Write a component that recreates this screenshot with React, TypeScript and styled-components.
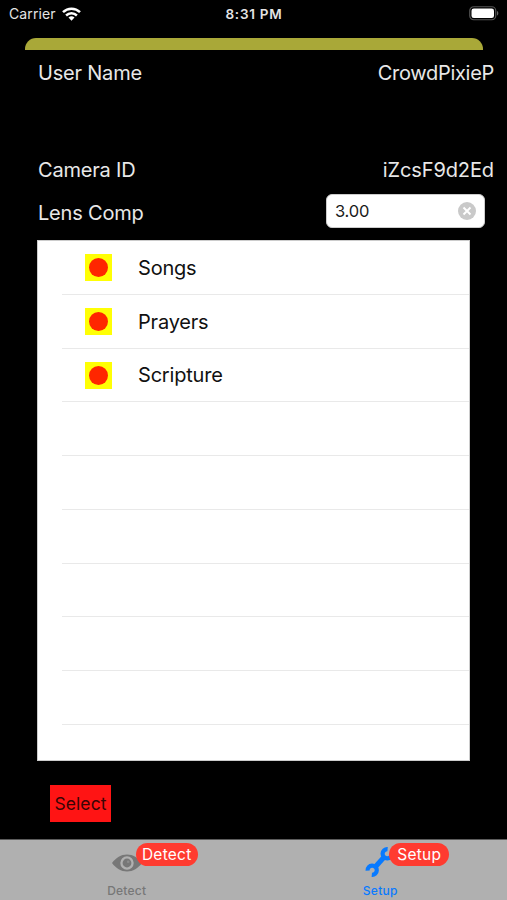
import React, { useState } from "react";
import styled, { createGlobalStyle } from "styled-components";

const GlobalStyle = createGlobalStyle`
  * {
    box-sizing: border-box;
  }

  body {
    margin: 0;
    background: #000;
    font-family: Inter, "Liberation Sans", sans-serif;
  }
`;

const Screen = styled.div`
  display: flex;
  flex-direction: column;
  width: 507px;
  height: 900px;
  overflow: hidden;
  background: #000;
`;

const StatusBar = styled.header`
  display: grid;
  grid-template-columns: 1fr auto 1fr;
  align-items: center;
  height: 28px;
  padding: 0 8px 1px 9px;
  color: #e4e4e4;
  font-size: 14px;
`;

const Carrier = styled.div`
  display: flex;
  align-items: center;
  gap: 6px;
  letter-spacing: 0.1px;
`;

const Clock = styled.div`
  font-weight: 600;
  font-size: 13.5px;
  letter-spacing: 0.75px;
`;

const BatteryIcon = styled.svg`
  justify-self: end;
`;

const Banner = styled.div`
  flex: none;
  height: 12px;
  margin: 10px 24px 0 25px;
  border-radius: 11px 11px 0 0;
  background: #a9a838;
`;

const Settings = styled.section`
  display: flex;
  flex-direction: column;
  height: 190px;
  padding-left: 38px;
`;

const Field = styled.div<{ $height: number; $right?: number }>`
  display: flex;
  flex: none;
  align-items: center;
  justify-content: space-between;
  height: ${(p) => p.$height}px;
  padding-right: ${(p) => p.$right ?? 13}px;
  color: #e8e8e8;
  font-size: 20px;
`;

const Text = styled.span<{ $spacing?: number }>`
  letter-spacing: ${(p) => p.$spacing ?? -0.2}px;
  white-space: nowrap;
`;

const Gap = styled.div`
  flex: none;
  height: 52px;
`;

const InputBox = styled.div`
  display: flex;
  align-items: center;
  width: 159px;
  height: 34px;
  margin-top: -4px;
  padding: 0 8px;
  border: 1px solid #ccc;
  border-radius: 6px;
  background: #fff;
`;

const Input = styled.input`
  flex: 1;
  min-width: 0;
  padding: 0;
  border: none;
  outline: none;
  background: transparent;
  color: #1a1a1a;
  font-family: inherit;
  font-size: 16.5px;
  letter-spacing: -0.2px;
`;

const ClearButton = styled.button`
  display: flex;
  padding: 0;
  border: none;
  background: none;
  cursor: pointer;
`;

const List = styled.ul`
  flex: none;
  width: 433px;
  height: 521px;
  margin: 0 0 0 37px;
  padding: 0 0 0 24px;
  border: 1px solid #ccc;
  overflow: hidden;
  list-style: none;
  background: #fff;
`;

const Row = styled.li`
  display: flex;
  align-items: center;
  gap: 26px;
  height: 53.75px;
  padding: 1px 0 0 23px;
  border-bottom: 1px solid #e9e9e9;
  color: #111;
  font-size: 20px;
`;

const Marker = styled.span`
  display: flex;
  align-items: center;
  justify-content: center;
  width: 27px;
  height: 27px;
  background: #ffff05;

  &::after {
    content: "";
    width: 19px;
    height: 19px;
    border-radius: 50%;
    background: #ff2600;
  }
`;

const SelectButton = styled.button`
  flex: none;
  width: 61px;
  height: 37px;
  margin: 24px 0 0 50px;
  padding: 0;
  border: none;
  background: #ff1414;
  color: #3a0505;
  font-family: inherit;
  font-size: 17.5px;
  letter-spacing: 0.1px;
  cursor: pointer;
`;

const TabBar = styled.nav`
  display: grid;
  grid-template-columns: 1fr 1fr;
  flex: none;
  height: 61px;
  margin-top: auto;
  border-top: 1px solid #5c5c5c;
  background: #b0b0b0;
`;

const Tab = styled.a<{ $active?: boolean }>`
  display: flex;
  flex-direction: column;
  align-items: center;
  color: ${(p) => (p.$active ? "#087aff" : "#777")};
  font-size: 12px;
  font-weight: 500;
  line-height: 16px;
  letter-spacing: 0.25px;
  cursor: pointer;
`;

const TabIcon = styled.div`
  position: relative;
  display: flex;
  align-items: center;
  justify-content: center;
  width: 32px;
  height: 43px;
  padding-top: 3px;
`;

const Badge = styled.span<{ $left: number; $width: number }>`
  position: absolute;
  top: 3px;
  left: ${(p) => p.$left}px;
  width: ${(p) => p.$width}px;
  height: 23px;
  border-radius: 12px;
  background: #ff3b30;
  color: #fff;
  font-size: 15.5px;
  font-weight: 400;
  line-height: 24px;
  text-align: center;
`;

const WifiIcon = () => (
  <svg width="19" height="14" viewBox="0 0 19 14">
    <g fill="none" stroke="#fff" strokeWidth="2.5">
      <path d="M1 5.1a12.2 12.2 0 0 1 17 0" />
      <path d="M4.1 8.5a7.8 7.8 0 0 1 10.8 0" />
    </g>
    <path d="M9.5 13.8l-3-3.2a4.4 4.4 0 0 1 6 0z" fill="#fff" />
  </svg>
);

const EyeIcon = () => (
  <svg width="30" height="18" viewBox="0 0 30 18">
    <path
      fillRule="evenodd"
      fill="#777"
      d="M0 9C4 3.6 9 .5 15 .5S26 3.6 30 9c-4 5.4-9 8.5-15 8.5S4 14.4 0 9zm15-6.7a6.7 6.7 0 1 0 0 13.4 6.7 6.7 0 0 0 0-13.4z"
    />
    <circle cx="15" cy="9" r="4.4" fill="#777" />
    <circle cx="16.2" cy="7.7" r="1.3" fill="#8c8c8c" />
  </svg>
);

const WrenchIcon = () => (
  <svg width="32" height="32" viewBox="0 0 32 32">
    <g fill="none" stroke="#087aff">
      <path d="M11 20.2L20.4 9.8" strokeWidth="5" />
      <path d="M3.6 23.6A4.6 4.6 0 1 1 7.8 27.8" strokeWidth="4.2" />
      <path d="M27.8 6.4A4.6 4.6 0 1 1 23.6 2.2" strokeWidth="4.2" />
    </g>
  </svg>
);

const items = ["Songs", "Prayers", "Scripture"];
const emptyRows = 6;

const App: React.FC = () => {
  const [lensComp, setLensComp] = useState("3.00");

  return (
    <>
      <GlobalStyle />
      <Screen>
        <StatusBar>
          <Carrier>
            <span>Carrier</span>
            <WifiIcon />
          </Carrier>
          <Clock>8:31 PM</Clock>
          <BatteryIcon width="30" height="15" viewBox="0 0 30 15">
            <rect
              x="0.75"
              y="0.75"
              width="26"
              height="13"
              rx="4"
              fill="none"
              stroke="#555"
              strokeWidth="1.2"
            />
            <rect x="2.5" y="2.5" width="22.5" height="9.5" rx="2.3" fill="#fff" />
            <path d="M28 5v4.6c1.8-.6 1.8-4 0-4.6z" fill="#666" />
          </BatteryIcon>
        </StatusBar>
        <Banner />

        <Settings>
          <Field $height={45}>
            <Text>User Name</Text>
            <Text $spacing={-0.3}>CrowdPixieP</Text>
          </Field>
          <Gap />
          <Field $height={46}>
            <Text>Camera ID</Text>
            <Text $spacing={-0.1}>iZcsF9d2Ed</Text>
          </Field>
          <Field $height={40} $right={22}>
            <Text>Lens Comp</Text>
            <InputBox>
              <Input
                value={lensComp}
                onChange={(e) => setLensComp(e.target.value)}
              />
              <ClearButton onClick={() => setLensComp("")}>
                <svg width="18" height="18" viewBox="0 0 17 17">
                  <circle cx="8.5" cy="8.5" r="8.5" fill="#c9c9c9" />
                  <path
                    d="M5.2 5.2l6.6 6.6M11.8 5.2l-6.6 6.6"
                    stroke="#fff"
                    strokeWidth="1.8"
                  />
                </svg>
              </ClearButton>
            </InputBox>
          </Field>
        </Settings>

        <List>
          {items.map((item) => (
            <Row key={item}>
              <Marker />
              <Text>{item}</Text>
            </Row>
          ))}
          {Array.from({ length: emptyRows }, (_, i) => (
            <Row key={i} />
          ))}
        </List>

        <SelectButton>Select</SelectButton>

        <TabBar>
          <Tab>
            <TabIcon>
              <EyeIcon />
              <Badge $left={25} $width={62}>
                Detect
              </Badge>
            </TabIcon>
            Detect
          </Tab>
          <Tab $active>
            <TabIcon>
              <WrenchIcon />
              <Badge $left={25} $width={60}>
                Setup
              </Badge>
            </TabIcon>
            Setup
          </Tab>
        </TabBar>
      </Screen>
    </>
  );
};

export default App;
